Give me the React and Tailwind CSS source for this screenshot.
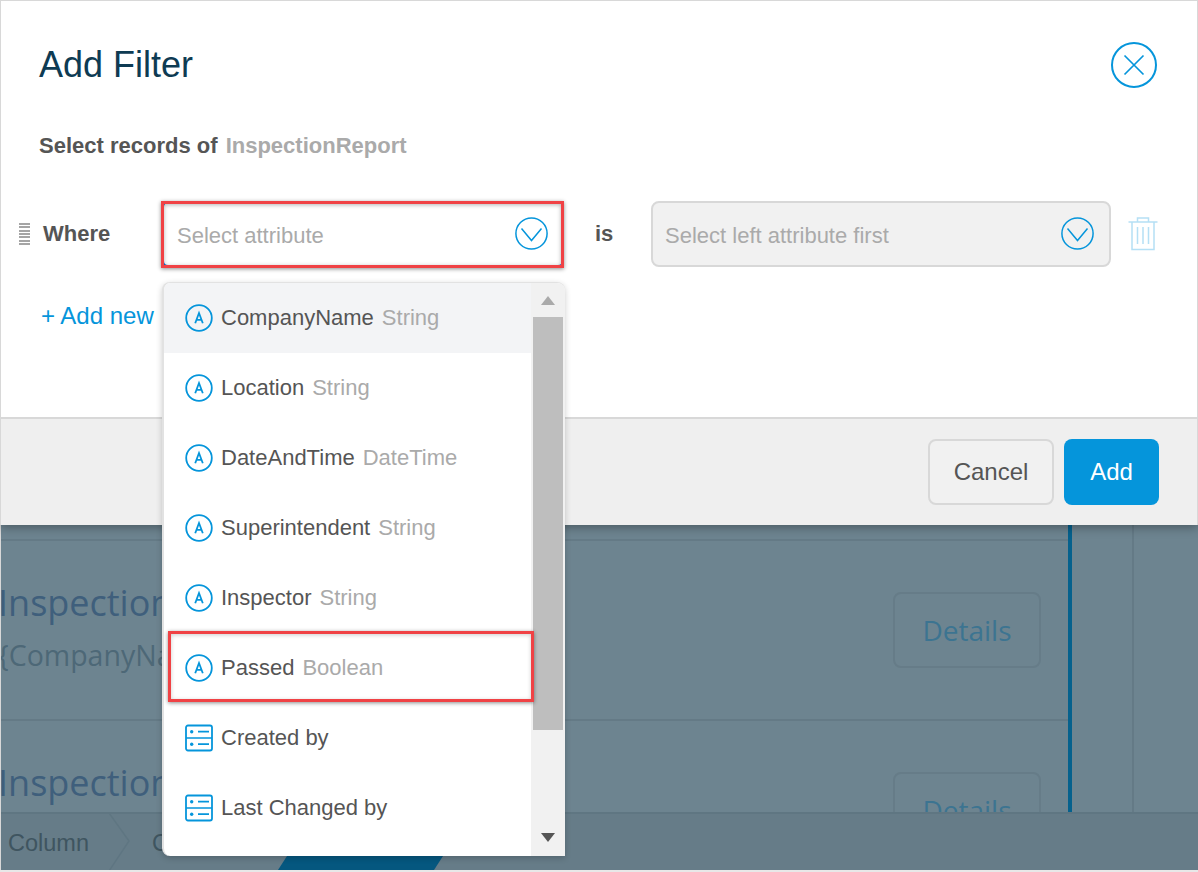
const items = [
  { name: 'CompanyName', type: 'String', active: true },
  { name: 'Location', type: 'String' },
  { name: 'DateAndTime', type: 'DateTime' },
  { name: 'Superintendent', type: 'String' },
  { name: 'Inspector', type: 'String' },
  { name: 'Passed', type: 'Boolean' },
  { name: 'Created by', assoc: true },
  { name: 'Last Changed by', assoc: true },
];

function AttrIcon() {
  return (
    <svg width="28" height="28" viewBox="0 0 28 28" fill="none" className="shrink-0">
      <circle cx="14" cy="14" r="12.8" stroke="#0595DB" strokeWidth="1.8" />
      <path d="M10.2 19.2 L14 9 L17.8 19.2 M11.4 15.8 H16.6" stroke="#0595DB" strokeWidth="1.8" />
    </svg>
  );
}

function AssocIcon() {
  return (
    <svg width="28" height="28" viewBox="0 0 28 28" fill="none" className="shrink-0">
      <rect x="1" y="1.5" width="26" height="25" rx="2" stroke="#0595DB" strokeWidth="1.8" />
      <path d="M1 14 H27 M13 7.7 H24 M13 20.2 H24" stroke="#0595DB" strokeWidth="1.7" />
      <circle cx="6.7" cy="7.7" r="1.7" fill="#0595DB" />
      <circle cx="6.7" cy="20.2" r="1.7" fill="#0595DB" />
    </svg>
  );
}

function CircleChevron() {
  return (
    <svg width="33" height="33" viewBox="0 0 33 33" fill="none" className="mb-[2px] shrink-0">
      <circle cx="16.5" cy="16.5" r="15.6" stroke="#0595DB" strokeWidth="1.5" />
      <path d="M6.5 11.5 L16.5 23.5 L26.5 11.5" stroke="#0595DB" strokeWidth="1.5" />
    </svg>
  );
}

function CloseIcon() {
  return (
    <svg width="22" height="22" viewBox="0 0 22 22" fill="none">
      <path d="M1.5 1.5 L20.5 20.5 M20.5 1.5 L1.5 20.5" stroke="#0595DB" strokeWidth="1.7" />
    </svg>
  );
}

function TrashIcon() {
  return (
    <svg width="30" height="34" viewBox="0 0 30 34" fill="none" stroke="#B5E0F5" strokeWidth="1.5">
      <path d="M0.5 5 H29.5 M9.5 5 V1 H20.5 V5 M4 5 V32.5 H26 V5 M9.5 10 V27 M15 10 V27 M20.5 10 V27" />
    </svg>
  );
}

function BackgroundRow({ sub }) {
  return (
    <div className="flex h-[180px] shrink-0 items-start justify-between border-b-2 border-[#647a86]">
      <div className="pt-[37px] font-['Open_Sans',sans-serif] text-[#3f5f7c]">
        <div className="ml-[-3px] text-[36px] leading-[50px] whitespace-nowrap">Inspection</div>
        {sub && <div className="ml-[-3px] mt-[8px] text-[28.5px] leading-[38px] text-[#4d6877] whitespace-nowrap">{'{CompanyName}'}</div>}
      </div>
      <div className="mr-[27px] mt-[51px] flex h-[76px] w-[148px] items-center justify-center rounded-lg border-2 border-[#667c88] font-['Open_Sans',sans-serif] text-[28px] text-[#3c7491]">
        Details
      </div>
    </div>
  );
}

export default function App() {
  return (
    <div className="relative h-[872px] w-[1198px] overflow-hidden bg-[#6d8490] font-['Liberation_Sans',sans-serif]">
      {/* page behind the overlay */}
      <div className="flex h-[870px] flex-col border-l border-[#d8d8d8]">
        <div className="flex h-[812px] shrink-0 overflow-hidden">
          <div className="w-[1067px] shrink-0 pt-[361px]">
            <div className="h-[180px] border-b-2 border-[#647a86]" />
            <BackgroundRow sub />
            <BackgroundRow />
          </div>
          <div className="w-[4px] shrink-0 bg-[#05618d]" />
          <div className="w-[62px] shrink-0 border-r-2 border-[#647a86]" />
        </div>
        <div className="relative flex h-[58px] items-center overflow-hidden border-t-2 border-[#5f7682] bg-[#667c88] text-[23.5px] text-[#3f5560]">
          <span className="ml-[7px] mt-[3px]">Column</span>
          <svg width="22" height="58" viewBox="0 0 22 58" fill="none" className="ml-[20px]">
            <path d="M0 0 L20 28 L0 58" stroke="#5f7682" strokeWidth="1.5" />
          </svg>
          <span className="ml-[21px] mt-[3px]">Column</span>
          <div className="absolute bottom-0 left-[277px] h-[14px] w-[165px] bg-[#05577f] [clip-path:polygon(9px_0,100%_0,156px_100%,0_100%)]" />
        </div>
      </div>
      <div className="h-[2px] bg-[#e8e8e8]" />

      {/* Add Filter dialog */}
      <div className="absolute left-0 top-0 flex h-[525px] w-[1198px] flex-col border border-b-0 border-[#d8d8d8] bg-white shadow-[0_2px_10px_rgba(0,0,0,0.35)]">
        <div className="h-[416px] shrink-0">
          <div className="flex items-center justify-between pl-[38px] pr-[40px] pt-[41px]">
            <h1 className="text-[36px] leading-[46px] text-[#0e3b53]">Add Filter</h1>
            <button className="flex h-[46px] w-[46px] items-center justify-center rounded-full border-2 border-[#0595DB]">
              <CloseIcon />
            </button>
          </div>
          <div className="mt-[44px] pl-[38px] text-[22px] font-bold leading-[28px] text-[#555]">
            Select records of <span className="ml-[2px] text-[#aaa]">InspectionReport</span>
          </div>
          <div className="mt-[41px] flex h-[66px] items-center">
            <div className="ml-[18px] flex h-[22px] w-[11px] flex-col justify-between">
              {[0, 1, 2, 3, 4, 5, 6].map((i) => <div key={i} className="h-[2px] bg-[#a5a5a5]" />)}
            </div>
            <span className="ml-[13px] w-[119px] text-[22px] font-bold leading-[28px] text-[#555]">Where</span>
            <div className="flex h-[66px] w-[402px] items-center justify-between rounded-md border-2 border-[#1a73d9] bg-white pl-[13px] pr-[14px]">
              <span className="mt-[2px] text-[22px] text-[#aaa]">Select attribute</span>
              <CircleChevron />
            </div>
            <span className="mb-[2px] ml-[31px] w-[56px] text-[22px] font-bold text-[#555]">is</span>
            <div className="flex h-[66px] w-[460px] items-center justify-between rounded-lg border-2 border-[#d8d8d8] bg-[#f1f1f1] pl-[12px] pr-[15px]">
              <span className="mt-[2px] text-[22px] text-[#aaa]">Select left attribute first</span>
              <CircleChevron />
            </div>
            <div className="ml-[17px]"><TrashIcon /></div>
          </div>
          <div className="ml-[40px] mt-[19px] text-[24px] leading-[60px] text-[#0595DB]">+ Add new</div>
        </div>
        <div className="flex flex-1 items-start justify-end gap-[10px] border-t-2 border-[#d8d8d8] bg-[#efefef] pr-[38px] pt-[20px]">
          <button className="h-[66px] w-[126px] rounded-lg border-2 border-[#d8d8d8] bg-[#f1f1f1] text-[24px] text-[#555]">Cancel</button>
          <button className="h-[66px] w-[95px] rounded-lg bg-[#0595DB] text-[24px] text-white">Add</button>
        </div>
      </div>

      {/* attribute dropdown */}
      <div className="absolute left-[162px] top-[282px] flex h-[574px] w-[403px] overflow-hidden rounded-t-lg rounded-bl-lg border-l-2 border-t border-[#e2e2e2] bg-white shadow-[0_2px_6px_rgba(0,0,0,0.2)]">
        <div className="w-[367px] shrink-0">
          {items.map((item) => (
            <div key={item.name} className={`flex h-[70px] items-center gap-[8px] pl-[21px] ${item.active ? 'bg-[#f3f4f6]' : ''}`}>
              {item.assoc ? <AssocIcon /> : <AttrIcon />}
              <span className="mb-[2px] text-[22px] text-[#555]">{item.name}</span>
              {item.type && <span className="mb-[2px] text-[22px] text-[#aaa]">{item.type}</span>}
            </div>
          ))}
        </div>
        <div className="flex flex-1 flex-col items-center bg-[#f1f1f1]">
          <div className="flex h-[34px] w-full items-center justify-center">
            <div className="h-0 w-0 border-x-[7px] border-b-[9px] border-x-transparent border-b-[#aaa]" />
          </div>
          <div className="h-[413px] w-[30px] bg-[#bebebe]" />
          <div className="flex-1" />
          <div className="mb-[14px] h-0 w-0 border-x-[7px] border-t-[9px] border-x-transparent border-t-[#555]" />
        </div>
      </div>

      {/* red annotation boxes */}
      <div className="absolute left-[161px] top-[201px] h-[67px] w-[403px] border-[3px] border-[#f04245] shadow-[0_1px_4px_rgba(0,0,0,0.45),inset_0_1px_4px_rgba(0,0,0,0.3)]" />
      <div className="absolute left-[168px] top-[631px] h-[71px] w-[366px] border-[3px] border-[#f04245] shadow-[0_1px_4px_rgba(0,0,0,0.45),inset_0_1px_4px_rgba(0,0,0,0.2)]" />
    </div>
  );
}
